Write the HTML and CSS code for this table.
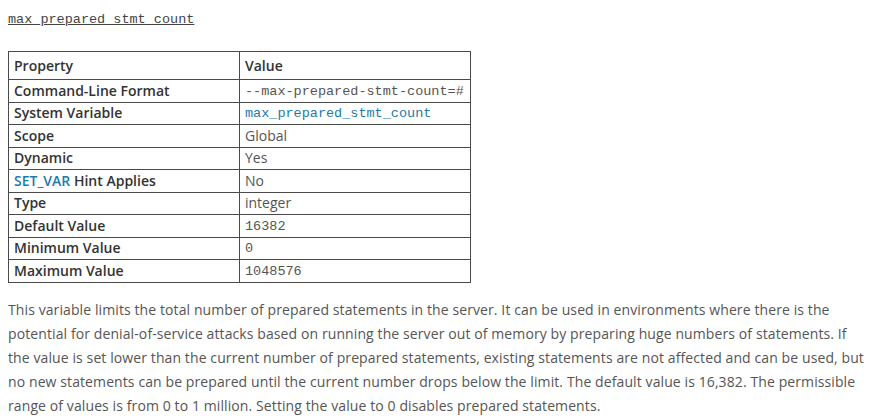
FILE: index.html
```html
<!DOCTYPE html>
<html>
<head>
<meta charset="utf-8">
<link rel="stylesheet" href="styles.css">
</head>
<body>
<div class="page">
  <p class="title"><a class="varname" href="#">max_prepared_stmt_count</a></p>
  <table class="props">
    <thead>
      <tr><th class="col1">Property</th><th>Value</th></tr>
    </thead>
    <tbody>
      <tr><th>Command-Line Format</th><td><code>--max-prepared-stmt-count=#</code></td></tr>
      <tr><th>System Variable</th><td><a class="link mono" href="#">max_prepared_stmt_count</a></td></tr>
      <tr><th>Scope</th><td>Global</td></tr>
      <tr><th>Dynamic</th><td>Yes</td></tr>
      <tr><th><a class="link" href="#">SET_VAR</a> Hint Applies</th><td>No</td></tr>
      <tr><th>Type</th><td>integer</td></tr>
      <tr><th>Default Value</th><td><code>16382</code></td></tr>
      <tr><th>Minimum Value</th><td><code>0</code></td></tr>
      <tr><th>Maximum Value</th><td><code>1048576</code></td></tr>
    </tbody>
  </table>
  <p class="desc">This variable limits the total number of prepared statements in the server. It can be used in environments where there is the potential for denial-of-service attacks based on running the server out of memory by preparing huge numbers of statements. If the value is set lower than the current number of prepared statements, existing statements are not affected and can be used, but no new statements can be prepared until the current number drops below the limit. The default value is 16,382. The permissible range of values is from 0 to 1 million. Setting the value to 0 disables prepared statements.</p>
</div>
</body>
</html>
```
FILE: styles.css
```css
html, body {
  margin: 0;
  padding: 0;
  background: #ffffff;
}
body {
  font-family: "Open Sans", "Liberation Sans", sans-serif;
  font-size: 14px;
  color: #555555;
}
.page {
  padding: 8px 8px 0 8px;
}
.title {
  margin: 0;
  padding-top: 2px;
  height: 40px;
  line-height: 16px;
}
.varname {
  font-family: "Liberation Mono", "Courier New", monospace;
  font-size: 13.5px;
  color: #444444;
  text-decoration: underline;
}
.props {
  border-collapse: collapse;
  width: 463px;
  margin-top: 1px;
}
.props th, .props td {
  border: 1px solid #4a4a4a;
  padding: 0 5px;
  text-align: left;
  vertical-align: middle;
  height: 21.5px;
  line-height: 18px;
}
.props th {
  font-weight: 600;
  color: #333333;
}
.props thead th {
  height: 27px;
}
.props .col1 {
  width: 220px;
}
.props td {
  font-weight: 400;
  color: #555555;
}
code, .mono {
  font-family: "Liberation Mono", "Courier New", monospace;
  font-size: 13.5px;
}
code {
  color: #555555;
}
.link {
  color: #1f7aa8;
  text-decoration: none;
}
.desc {
  margin: 15px 0 0 0;
  line-height: 24px;
  width: 862px;
  letter-spacing: 0.1px;
}
```
